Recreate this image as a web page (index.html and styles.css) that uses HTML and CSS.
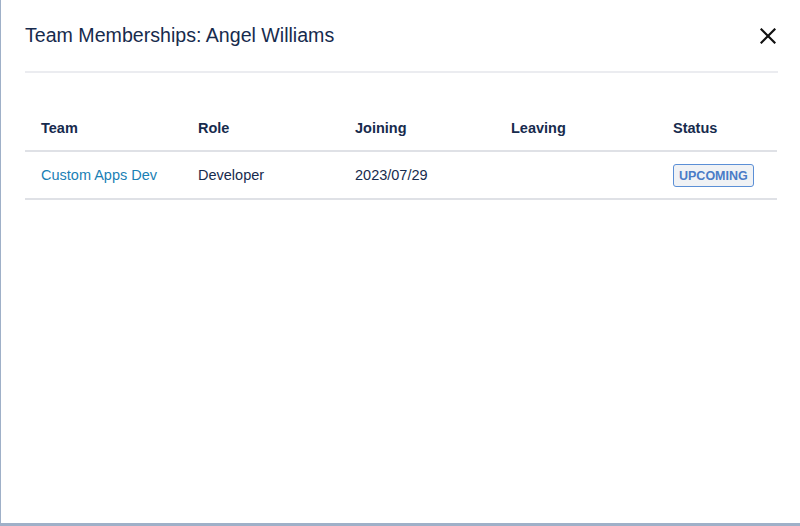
FILE: index.html
```html
<!DOCTYPE html>
<html lang="en">
<head>
    <meta charset="UTF-8">
    <meta name="viewport" content="width=device-width,initial-scale=1.0" />
    <title>Team Memberships</title>
    <link rel="stylesheet" href="styles.css">
</head>
<body>
    <div class="modal">
        <div class="modal-header">
            <h2 class="modal-title">Team Memberships: Angel Williams</h2>
            <button class="close" aria-label="Close">
                <svg width="16" height="16" viewBox="0 0 16 16">
                    <path d="M1.5 1.5 L14.5 14.5 M14.5 1.5 L1.5 14.5" stroke="#111" stroke-width="2.2" stroke-linecap="square" fill="none" />
                </svg>
            </button>
        </div>
        <table class="memberships">
            <thead>
                <tr>
                    <th class="col-team">Team</th>
                    <th class="col-role">Role</th>
                    <th class="col-join">Joining</th>
                    <th class="col-leave">Leaving</th>
                    <th class="col-status">Status</th>
                </tr>
            </thead>
            <tbody>
                <tr>
                    <td><a href="#">Custom Apps Dev</a></td>
                    <td>Developer</td>
                    <td>2023/07/29</td>
                    <td></td>
                    <td><span class="badge">Upcoming</span></td>
                </tr>
            </tbody>
        </table>
    </div>
</body>
</html>
```

FILE: styles.css
```css
html, body {
    margin: 0;
    height: 100%;
}
body {
    background: #9fb0c8;
    font-family: 'Liberation Sans', Arial, sans-serif;
    color: #172b4d;
    overflow: hidden;
}
.modal {
    margin-left: 1px;
    height: 523px;
    background: #fff;
    padding: 0 22px 0 24px;
    box-sizing: border-box;
}
.modal-header {
    display: flex;
    align-items: center;
    justify-content: space-between;
    height: 73px;
    border-bottom: 2px solid #ebecf0;
    box-sizing: border-box;
}
.modal-title {
    margin: 0;
    font-size: 19.6px;
    font-weight: 400;
    color: #172b4d;
}
.close {
    border: none;
    background: none;
    padding: 0;
    margin-right: 2px;
    width: 16px;
    height: 16px;
    cursor: pointer;
}
.close svg {
    display: block;
}
.memberships {
    width: 752px;
    margin-top: 32px;
    border-collapse: collapse;
    table-layout: fixed;
    font-size: 14.5px;
}
.memberships th,
.memberships td {
    text-align: left;
    padding: 0 16px;
}
.memberships th {
    height: 45px;
    font-weight: 700;
    color: #172b4d;
    border-bottom: 2px solid #dfe1e6;
    vertical-align: middle;
}
.memberships td {
    height: 46px;
    color: #172b4d;
    border-bottom: 2px solid #dfe1e6;
}
.col-team { width: 125px; }
.col-role { width: 125px; }
.col-join { width: 124px; }
.col-leave { width: 130px; }
.col-status { width: 88px; }
.memberships a {
    color: #1a7fb5;
    text-decoration: none;
}
.badge {
    display: inline-block;
    padding: 4px 5px 3px;
    border: 1px solid #5b8fd6;
    border-radius: 3px;
    background: #f0f2f5;
    color: #4a7cc7;
    font-size: 12.5px;
    font-weight: 700;
    text-transform: uppercase;
    letter-spacing: 0;
}
```
